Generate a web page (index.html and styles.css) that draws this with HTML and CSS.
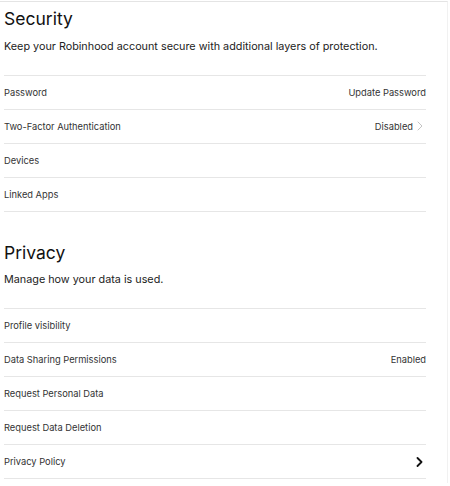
FILE: index.html
```html
<!DOCTYPE html>
<html lang="en">
  <head>
    <meta charset="UTF-8" />
    <title>Security and Privacy</title>
    <link rel="stylesheet" href="styles.css">
  </head>
  <body>
    <div class="page">
      <!-- Security -->
      <section class="group">
        <h2 class="group-title">Security</h2>
        <p class="group-desc">Keep your Robinhood account secure with additional layers of protection.</p>
        <ul class="rows">
          <li class="row">
            <span class="row-label">Password</span>
            <span class="row-value">Update Password</span>
          </li>
          <li class="row">
            <span class="row-label">Two-Factor Authentication</span>
            <span class="row-value">Disabled
              <svg class="chev chev-light" width="6" height="10" viewBox="0 0 6 10"><polyline points="1,1 5,5 1,9" /></svg>
            </span>
          </li>
          <li class="row"><span class="row-label">Devices</span></li>
          <li class="row"><span class="row-label">Linked Apps</span></li>
        </ul>
      </section>

      <!-- Privacy -->
      <section class="group">
        <h2 class="group-title">Privacy</h2>
        <p class="group-desc">Manage how your data is used.</p>
        <ul class="rows">
          <li class="row"><span class="row-label">Profile visibility</span></li>
          <li class="row">
            <span class="row-label">Data Sharing Permissions</span>
            <span class="row-value">Enabled</span>
          </li>
          <li class="row"><span class="row-label">Request Personal Data</span></li>
          <li class="row"><span class="row-label">Request Data Deletion</span></li>
          <li class="row">
            <span class="row-label">Privacy Policy</span>
            <span class="row-value">
              <svg class="chev chev-dark" width="7" height="10" viewBox="0 0 7 10"><polyline points="1.5,1 5.5,5 1.5,9" /></svg>
            </span>
          </li>
        </ul>
      </section>
    </div>
  </body>
</html>
```

FILE: styles.css
```css
/* reset */
html,
body,
h2,
p,
ul {
  margin: 0;
  padding: 0;
}
ul {
  list-style: none;
}

body {
  background-color: #fff;
  font-family: Inter, "Liberation Sans", sans-serif;
  color: #1e1e1e;
}

/* page box */
.page {
  box-sizing: border-box;
  width: 448px;
  margin-top: 1px;
  padding: 0 21px 4px 4px;
  border-top: 1px solid #e4e4e4;
  border-right: 1px solid #f1f1f1;
}

/* section */
.group + .group {
  margin-top: 30px;
}
.group-title {
  margin-top: 6px;
  font-size: 17.5px;
  font-weight: 400;
  line-height: 22px;
  color: #111;
}
.group-desc {
  margin-top: 8.5px;
  font-size: 10.8px;
  line-height: 16px;
  color: #222;
}

/* rows */
.rows {
  margin-top: 20px;
  border-top: 1px solid #e6e6e6;
}
.row {
  display: flex;
  align-items: center;
  justify-content: space-between;
  height: 33px;
  border-bottom: 1px solid #e6e6e6;
  font-size: 9.3px;
  color: #333;
}
.row-value {
  display: flex;
  align-items: center;
  gap: 4px;
}

/* chevrons */
.chev {
  fill: none;
  stroke-linecap: round;
  stroke-linejoin: round;
}
.chev-light {
  stroke: #c4c4c4;
  stroke-width: 1;
  margin-right: 3px;
}
.chev-dark {
  stroke: #111;
  stroke-width: 1.8;
  margin-right: 3px;
}
```
